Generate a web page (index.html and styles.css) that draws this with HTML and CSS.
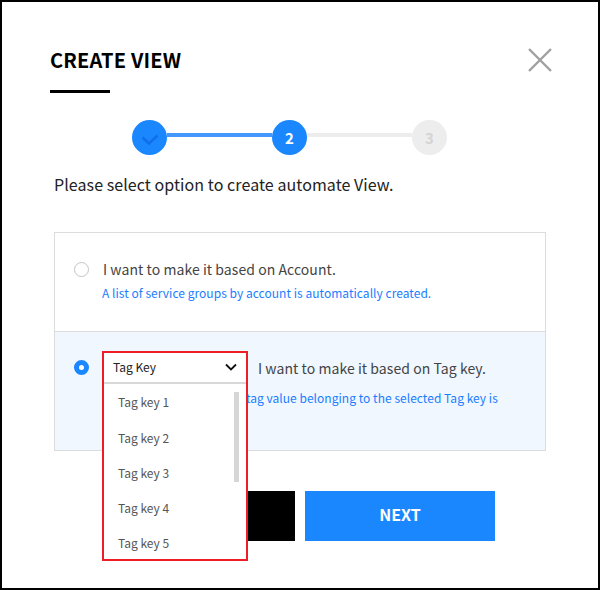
FILE: index.html
```html
<!DOCTYPE html>
<html lang="en">
<head>
<meta charset="utf-8">
<title>Create View</title>
<link rel="stylesheet" href="styles.css">
</head>
<body>
<main class="modal">
  <header class="head">
    <h1 class="title">CREATE VIEW</h1>
    <button class="close" aria-label="Close">
      <svg width="26" height="26" viewBox="0 0 26 26"><path d="M2 2 L24 24 M24 2 L2 24" stroke="#a0a0a0" stroke-width="2.400" fill="none"/></svg>
    </button>
  </header>
  <div class="rule"></div>
  <div class="stepper">
    <span class="step on">
      <svg class="check" width="18" height="12" viewBox="0 0 18 12"><path d="M1.500 3.500 L8 9.500 L16.500 1.500" stroke="#0f6fea" stroke-width="2.500" fill="none"/></svg>
    </span>
    <span class="link on"></span>
    <span class="step on">2</span>
    <span class="link"></span>
    <span class="step">3</span>
  </div>
  <p class="lead">Please select option to create automate View.</p>
  <section class="options">
    <div class="option">
      <span class="radio"></span>
      <div class="body">
        <p class="label">I want to make it based on Account.</p>
        <p class="hint">A list of service groups by account is automatically created.</p>
      </div>
    </div>
    <div class="option selected">
      <span class="radio checked"></span>
      <div class="body">
        <div class="select-row">
          <div class="select-slot"></div>
          <p class="label">I want to make it based on Tag key.</p>
        </div>
        <p class="hint wrapped">A list of service groups by tag value belonging to the selected Tag key is automatically created.</p>
      </div>
      <div class="dropdown">
        <div class="dd-head">
          <span>Tag Key</span>
          <svg width="12" height="8" viewBox="0 0 12 8"><path d="M1 1.500 L6 6.500 L11 1.500" stroke="#111" stroke-width="1.800" fill="none"/></svg>
        </div>
        <ul class="dd-list">
          <li>Tag key 1</li>
          <li>Tag key 2</li>
          <li>Tag key 3</li>
          <li>Tag key 4</li>
          <li>Tag key 5</li>
        </ul>
        <span class="thumb"></span>
      </div>
    </div>
  </section>
  <footer class="actions">
    <button class="btn prev">PREV</button>
    <button class="btn next">NEXT</button>
  </footer>
</main>
</body>
</html>
```
FILE: styles.css
```css
* { box-sizing: border-box; }
html, body { margin: 0; padding: 0; background: #fff; }
body { font-family: "Noto Sans CJK KR", "Noto Sans", sans-serif; }
p, h1, ul { margin: 0; padding: 0; }
.modal {
  width: 600px;
  height: 590px;
  border: 2px solid #000;
  padding: 0 52px 0 52px;
  overflow: hidden;
  background: #fff;
}
.head {
  display: flex;
  justify-content: space-between;
  margin-top: 43px;
  height: 30px;
  align-items: center;
  margin-left: -4px;
  margin-right: -7px;
}
.title { font-size: 20px; font-weight: 700; line-height: 30px; color: #000; letter-spacing: 0.180px; }
.close { border: 0; background: none; padding: 0; width: 26px; height: 26px; display: block; margin-top: -1px; }
.close svg { display: block; }
.rule { width: 60px; height: 3px; background: #000; margin: 15px 0 0 -4px; }
.stepper { display: flex; align-items: flex-start; margin: 27px 0 0 78px; }
.step {
  width: 35px; height: 35px; border-radius: 50%;
  background: #ededed; color: #d4d4d4;
  font-size: 15px; font-weight: 700;
  display: flex; align-items: center; justify-content: center;
  flex: none;
}
.step.on { background: #1a87ff; color: #fff; }
.check { display: block; margin-top: 4px; }
.link { width: 105px; height: 4px; background: #ededed; margin-top: 13px; flex: none; }
.link.on { background: #4497ff; }
.lead { font-size: 16px; line-height: 24px; color: #222; margin-top: 17px; letter-spacing: 0.070px; }
.options { margin-top: 36px; border: 1px solid #dcdcdc; width: 492px; height: 219px; }
.option { position: relative; display: flex; height: 98px; padding: 21px 0 0 19px; }
.option.selected { height: 119px; background: #f0f7ff; border-top: 1px solid #dcdcdc; padding-top: 19px; }
.radio {
  width: 15px; height: 15px; border-radius: 50%;
  border: 1px solid #c4c4c4; background: #fff;
  flex: none; margin-top: 8px;
}
.radio.checked { border: 5px solid #1a87ff; margin-top: 9px; }
.body { margin-left: 13px; flex: 1; min-width: 0; }
.label { font-size: 14px; line-height: 22px; color: #444; margin-left: 1px; margin-top: 4px; letter-spacing: 0.060px; }
.hint { font-size: 12px; line-height: 20px; color: #1a7dff; margin-top: 3px; letter-spacing: 0.033px; }
.select-row { display: flex; align-items: flex-start; }
.select-slot { width: 156px; flex: none; }
.select-row .label { margin: 6px 0 0 0; }
.hint.wrapped { margin-top: 9px; width: 400px; }
.dropdown {
  position: absolute;
  left: 47px; top: 19px;
  width: 146px; height: 210px;
  border: 2px solid #ee1c25;
  background: #fff;
  z-index: 2;
}
.dd-head {
  height: 31px;
  border-bottom: 2px solid #d8d8d8;
  display: flex; align-items: center; justify-content: space-between;
  padding: 0 9px 2px 9px;
  font-size: 12px; color: #222;
}
.dd-list { list-style: none; }
.dd-list li { height: 35.300px; line-height: 35.300px; padding-left: 14px; font-size: 12px; color: #555; }
.dd-list li:nth-child(2) { padding-top: 1px; }
.thumb { position: absolute; left: 130px; top: 39px; width: 5px; height: 90px; background: #d6d6d6; }
.actions { display: flex; justify-content: center; gap: 10px; margin-top: 40px; width: 492px; }
.btn { width: 190px; height: 50px; border: 0; font-family: inherit; font-size: 16px; font-weight: 700; color: #fff; padding: 0 0 5px; }
.prev { background: #000; }
.next { background: #1a87ff; }
```
